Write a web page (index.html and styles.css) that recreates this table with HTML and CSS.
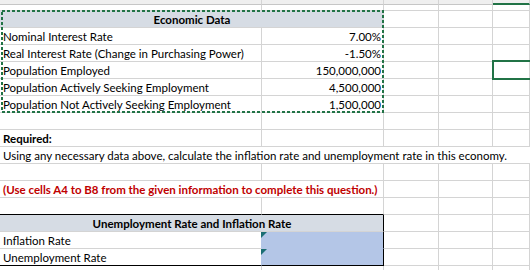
FILE: index.html
```html
<!DOCTYPE html>
<html>
<head>
<meta charset="utf-8">
<link rel="stylesheet" href="styles.css">
</head>
<body>
<div class="sheet">
  <div class="h"></div><div class="h"></div><div class="h"></div><div class="h"></div><div class="h h-sel"></div>

  <div class="c"></div><div class="c"></div><div class="c"></div><div class="c"></div><div class="c"></div>

  <div class="c span2 hdr">Economic Data</div><div class="c"></div><div class="c"></div><div class="c"></div>

  <div class="c">Nominal Interest Rate</div><div class="c num">7.00%</div><div class="c"></div><div class="c"></div><div class="c"></div>
  <div class="c">Real Interest Rate (Change in Purchasing Power)</div><div class="c num">-1.50%</div><div class="c"></div><div class="c"></div><div class="c"></div>
  <div class="c">Population Employed</div><div class="c num">150,000,000</div><div class="c"></div><div class="c"></div><div class="c"></div>
  <div class="c">Population Actively Seeking Employment</div><div class="c num">4,500,000</div><div class="c"></div><div class="c"></div><div class="c"></div>
  <div class="c">Population Not Actively Seeking Employment</div><div class="c num">1,500,000</div><div class="c"></div><div class="c"></div><div class="c"></div>

  <div class="c"></div><div class="c"></div><div class="c"></div><div class="c"></div><div class="c"></div>

  <div class="c bold">Required:</div><div class="c"></div><div class="c"></div><div class="c"></div><div class="c"></div>

  <div class="c full">Using any necessary data above, calculate the inflation rate and unemployment rate in this economy.</div>

  <div class="c"></div><div class="c"></div><div class="c"></div><div class="c"></div><div class="c"></div>

  <div class="c span2 red">(Use cells A4 to B8 from the given information to complete this question.)</div><div class="c"></div><div class="c"></div><div class="c"></div>

  <div class="c bb"></div><div class="c bb"></div><div class="c"></div><div class="c"></div><div class="c"></div>

  <div class="c span2 hdr br">Unemployment Rate and Inflation Rate</div><div class="c"></div><div class="c"></div><div class="c"></div>

  <div class="c pre-input">Inflation Rate</div><div class="c input br"><span class="tri"></span></div><div class="c"></div><div class="c"></div><div class="c"></div>
  <div class="c pre-input bb">Unemployment Rate</div><div class="c input br bb"><span class="tri"></span></div><div class="c"></div><div class="c"></div><div class="c"></div>

  <div class="c last"></div><div class="c last"></div><div class="c last"></div><div class="c last"></div><div class="c last"></div>

  <svg class="ants" width="386" height="104" viewBox="0 0 386 104">
    <rect x="2" y="1" width="381" height="101" fill="none" stroke="#217346" stroke-width="2" stroke-dasharray="3 2" shape-rendering="crispEdges"/>
  </svg>
  <div class="selbox"></div>
</div>
</body>
</html>
```
FILE: styles.css
```css
html, body {
  margin: 0;
  padding: 0;
  background: #fff;
}

body {
  font-family: Lato, "Liberation Sans", sans-serif;
  font-size: 11.5px;
  color: #000;
  overflow: hidden;
}

.sheet {
  position: relative;
  display: grid;
  grid-template-columns: 262px 122px 55px 54px 1fr;
  grid-template-rows: 5px 6px repeat(15, 17px) 4px;
  width: 530px;
  height: 270px;
}

.h {
  background: #efefef;
  border-right: 1px solid #d4d4d4;
  border-bottom: 1px solid #c6c6c6;
}

.h-sel {
  border-bottom: 2px solid #217346;
  height: 5px;
  box-sizing: border-box;
}

.c {
  box-sizing: border-box;
  border-right: 1px solid #d4d4d4;
  border-bottom: 1px solid #d4d4d4;
  display: flex;
  align-items: flex-end;
  padding: 0 2px 0 3px;
  line-height: 14px;
  white-space: nowrap;
  min-width: 0;
  position: relative;
}

.last {
  border-bottom: none;
}

.span2 {
  grid-column: span 2;
}

.full {
  grid-column: 1 / -1;
  border-right: none;
}

.hdr {
  background: #d6dce4;
  font-weight: 700;
  justify-content: center;
}

.num {
  justify-content: flex-end;
}

.bold {
  font-weight: 700;
}

.red {
  color: #c00000;
  font-weight: 700;
}

.bb {
  border-bottom-color: #000;
}

.br {
  border-right-color: #000;
}

.input {
  background: #b4c6e7;
}

.input:not(.bb) {
  border-bottom-color: #b4c6e7;
}

.pre-input {
  border-right-color: #b4c6e7;
}

.tri {
  position: absolute;
  top: 0;
  left: -1px;
  width: 0;
  height: 0;
  border-top: 6px solid #1b6e74;
  border-right: 6px solid transparent;
}

.ants {
  position: absolute;
  left: 0;
  top: 10px;
}

.selbox {
  position: absolute;
  left: 492px;
  top: 60px;
  width: 60px;
  height: 20px;
  box-sizing: border-box;
  border: 2px solid #217346;
}
```
